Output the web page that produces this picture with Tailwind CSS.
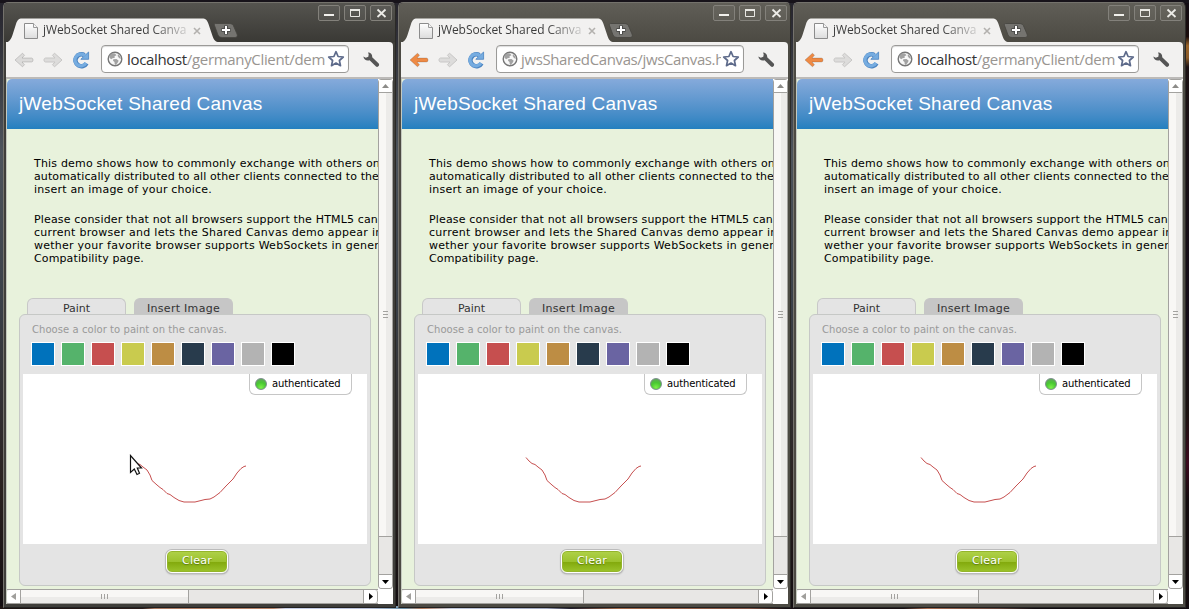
<!DOCTYPE html>
<html lang="en">
<head>
<meta charset="utf-8">
<title>jWebSocket Shared Canvas</title>
<script src="https://cdn.jsdelivr.net/npm/@tailwindcss/browser@4"></script>
</head>
<body class="relative w-[1189px] h-[609px] overflow-hidden bg-[linear-gradient(180deg,#26242c_0%,#4d545c_25%,#3a4048_50%,#2a2220_80%,#120d10_100%)]">
<div class="absolute right-0 top-0 h-full w-[6px] bg-[linear-gradient(180deg,#120c14_0%,#1a0c0c_6%,#9a6428_7.500%,#8a5a28_9.500%,#1c1214_11%,#140c18_55%,#1c1210_68%,#3c0a1e_76%,#140c0e_82%,#140c0e_100%)]"></div>
<div class="absolute left-0 top-0 h-[3px] w-full bg-[#17131a]"></div>
<div class="absolute left-0 bottom-0 h-[3px] w-full bg-[linear-gradient(90deg,#1c1412_0%,#2a1c1a_12%,#a87860_13%,#b88468_23%,#c8d0e8_24%,#b8c0d8_31%,#6a90a8_34%,#b07858_35.500%,#c0c8dc_38%,#a0a8c0_46%,#201c2c_48%,#a06848_52%,#805040_63%,#181014_66%,#180f12_76%,#a86c50_78%,#604038_84%,#120c10_87%)]"></div>

<template id="win">
<section class="absolute top-[2px] w-[393px] h-[606px] flex flex-col rounded-t-[5px] border-t border-l border-[#74726c] border-r border-r-[#2b2a27] border-b border-b-[#222]">
  <header data-part="bar" class="h-[39px] shrink-0 flex items-start rounded-t-[4px] pl-[2px]">
    <div class="relative mt-[15px] h-[25px] w-[207px] flex items-center pl-[18px]">
      <svg class="absolute left-0 top-0" width="213" height="25" viewBox="6 18 213 25"><path d="M6 43C10 41 11 39 12.500 35L16 24C17.500 20 18.500 18.500 22 18.500H202C206 18.500 207 20 208.500 24L212.500 36C214 40 215.500 42 219 42V43Z" fill="#f2f1f0"/></svg>
      <svg class="relative shrink-0" width="14" height="16" viewBox="0 0 14 16"><defs><linearGradient id="pg" x1="0" y1="0" x2="0" y2="1"><stop offset="0" stop-color="#fff"/><stop offset="1" stop-color="#dcdcdc"/></linearGradient></defs><path d="M.5.5H9.500L13.500 4.500V15.500H.5Z" fill="url(#pg)" stroke="#8c8c8c"/><path d="M9.500.5V4.500H13.500" fill="#f6f6f6" stroke="#9a9a9a"/></svg>
      <div class="relative ml-[4px] mb-[2px] w-[144px] overflow-hidden whitespace-nowrap pl-px font-['Open_Sans','Noto_Sans',sans-serif] text-[12px] leading-[18px] text-[#3c3c3c] [mask-image:linear-gradient(90deg,#000_110px,#0003_144px)]"><span data-fit="149" class="inline-block">jWebSocket Shared Canvas</span></div>
      <svg class="relative ml-[7px] shrink-0" width="8" height="8" viewBox="0 0 8 8"><path d="M1 1L7 7M7 1L1 7" stroke="#b3b1ae" stroke-width="1.600"/></svg>
    </div>
    <svg class="mt-[19px]" width="26" height="17" viewBox="213 22 26 17"><path d="M215.500 23.500H229C232 23.500 233.200 24.500 234 27L237 34C237.800 36 237 37.500 235 37.500H222.500C220 37.500 218.600 36.500 217.800 34.500L214.500 25.500C214 24 214.500 23.500 215.500 23.500Z" fill="#757470" stroke="#45443f" stroke-width=".8"/><path d="M226 25.500V34.500M221.500 30H230.500" stroke="#4a4a48" stroke-width="4"/><path d="M226 26V34M222 30H230" stroke="#fff" stroke-width="2"/></svg>
    <svg class="ml-auto mt-[1px] mr-[3px]" width="75" height="18" viewBox="317 4 75 18"><g fill="#ffffff" fill-opacity=".05" stroke="#83817b"><rect x="318.500" y="5.500" width="21" height="15" rx="1.500"/><rect x="344.500" y="5.500" width="21" height="15" rx="1.500"/><rect x="370.500" y="5.500" width="21" height="15" rx="1.500"/></g><path d="M324 15H334" stroke="#f1f0ec" stroke-width="2"/><path d="M350.500 9.500H359.500V16.500H350.500Z" fill="none" stroke="#e8e7e3"/><path d="M350 10H360" stroke="#e8e7e3" stroke-width="2"/><path d="M377.500 9.500L385.500 17M385.500 9.500L377.500 17" stroke="#ecebe7" stroke-width="1.800"/></svg>
  </header>

  <div class="flex-1 min-h-0 flex flex-col border-l-2 border-r-2 border-b-[3px]" data-part="frame">
    <nav class="h-[37px] shrink-0 flex items-center rounded-tr-[4px] border-b-2 border-[#bcbab8] bg-[#f2f1f0] pl-[8px]">
      <svg data-part="back" class="text-[#dcdbda]" width="20" height="16" viewBox="0 0 20 16"><path d="M1 8L8.500 1.200L10.500 3.300L8 6H17.500C19.500 6 19.500 10 17.500 10H8L10.500 12.700L8.500 14.800Z" fill="currentColor" stroke="#00000026" stroke-linejoin="round"/></svg>
      <svg class="ml-[9px] text-[#dddcdb]" width="20" height="16" viewBox="0 0 20 16"><path d="M19 8L11.500 1.200L9.500 3.300L12 6H2.500C.5 6 .5 10 2.500 10H12L9.500 12.700L11.500 14.800Z" fill="currentColor" stroke="#c8c7c6" stroke-linejoin="round"/></svg>
      <svg class="ml-[9px]" width="18" height="18" viewBox="0 0 18 18"><path d="M14.500 12.300A5.900 5.900 0 1 1 12.400 4.200" fill="none" stroke="#4a83c0" stroke-width="4.600"/><path d="M16.600 1V8.300H8.800Z" fill="#76ace0" stroke="#4a83c0" stroke-width=".8"/><path d="M14 11.900A5.900 5.900 0 1 1 13 4.800" fill="none" stroke="#76ace0" stroke-width="3.200"/></svg>
      <div class="ml-[11px] w-[248px] h-[28px] mb-px flex items-center rounded-[4px] border border-[#9b9a98] bg-white pl-[5px] shadow-[inset_0_1px_1px_#ddd]">
        <svg class="shrink-0" width="16" height="16" viewBox="0 0 16 16"><circle cx="8" cy="8" r="6.800" fill="#f8f8f8" stroke="#777" stroke-width="1.400"/><path d="M2.500 4.500L5 2.200L8 2.400L9.500 4.200L7.500 5.200L7.800 6.800L5.600 7.200L4.300 8.200L2.600 7Z" fill="#a2a2a2"/><path d="M6.300 8.200L9.500 8L11.700 9.700L10.500 12L8.800 14L7.700 13.200L7.500 11L6 9.700Z" fill="#a2a2a2"/><path d="M11 3L13.300 5.500L13.800 8L12 7L10.600 5Z" fill="#a2a2a2"/></svg>
        <div data-part="url" class="w-[203px] overflow-hidden whitespace-nowrap font-['Open_Sans','Noto_Sans',sans-serif] text-[15px] leading-[22px] text-[#999591]"></div>
        <svg class="ml-[1px] shrink-0" width="18" height="18" viewBox="0 0 18 18"><path d="M9 1.700L11.100 6.500L16.300 7L12.400 10.500L13.500 15.700L9 13L4.500 15.700L5.600 10.500L1.700 7L6.900 6.500Z" fill="#fff" stroke="#5e6b8b" stroke-width="1.700" stroke-linejoin="round"/></svg>
      </div>
      <svg class="ml-[13px]" width="18" height="18" viewBox="0 0 18 18"><path d="M6 1.500C8.500 1.500 10.500 3.500 10.200 6.300L16.700 12.600C18 14.300 16 16.700 14 15.600L7.600 9.200C4.800 10.200 2 8.800 1.300 5.600L3.800 6.800L6.300 5.800L6.700 3.300Z" fill="#555"/></svg>
    </nav>

    <div class="flex-1 min-h-0 flex bg-[#e8f2dc]">
      <div class="flex-1 min-w-0 flex flex-col border-l border-[#c4c9bf]">
        <main class="flex-1 min-h-0 overflow-hidden bg-[#e8f2dc]">
          <h1 class="h-[50px] pl-[11px] rounded-tl-[5px] bg-linear-to-b from-[#85aadb] to-[#2380bf] text-white font-['Liberation_Sans',sans-serif] text-[19px] leading-[50px] whitespace-nowrap"><span data-fit="244.500" class="inline-block pl-px">jWebSocket Shared Canvas</span></h1>
          <div class="mt-[28px] pl-[27px] h-[141px] whitespace-nowrap font-['DejaVu_Sans',sans-serif] text-[11px] leading-[13px] text-black">
            <p><span data-fit="346" class="inline-block">This demo shows how to commonly exchange with others on</span><br><span data-fit="345" class="inline-block">automatically distributed to all other clients connected to the</span><br><span data-fit="178" class="inline-block">insert an image of your choice.</span></p>
            <p class="mt-[17px]"><span data-fit="344" class="inline-block">Please consider that not all browsers support the HTML5 can</span><br><span data-fit="348.500" class="inline-block">current browser and lets the Shared Canvas demo appear in</span><br><span data-fit="345" class="inline-block">wether your favorite browser supports WebSockets in gener</span><br><span data-fit="110" class="inline-block">Compatibility page.</span></p>
          </div>
          <div class="ml-[20px] flex gap-[8px] font-['DejaVu_Sans',sans-serif] text-[11px] leading-[19px] text-center text-[#333]">
            <div class="h-[16px] w-[99px] rounded-t-[6px] border border-b-0 border-[#c8c8c8] bg-[#e4e4e4]">Paint</div>
            <div class="h-[16px] w-[99px] rounded-t-[6px] border border-b-0 border-[#c6c6c6] bg-[#c6c6c6]"><span data-fit="73" class="inline-block">Insert Image</span></div>
          </div>
          <div class="ml-[12px] w-[352px] h-[272px] rounded-[6px] border border-[#c6c8c6] bg-[#e4e4e4] px-[3px] font-['DejaVu_Sans',sans-serif]">
            <p class="pl-[9px] pt-[8px] h-[21px] text-[10px] leading-[13px] text-[#999]"><span data-fit="195" class="inline-block">Choose a color to paint on the canvas.</span></p>
            <div class="mt-[6px] ml-[8px] flex gap-[6px]">
              <i class="size-[24px] border border-white bg-[#0072bc]"></i><i class="size-[24px] border border-white bg-[#55b36b]"></i><i class="size-[24px] border border-white bg-[#c64f4f]"></i><i class="size-[24px] border border-white bg-[#c9cb4e]"></i><i class="size-[24px] border border-white bg-[#bd8d44]"></i><i class="size-[24px] border border-white bg-[#283b4c]"></i><i class="size-[24px] border border-white bg-[#6a64a2]"></i><i class="size-[24px] border border-white bg-[#b3b3b3]"></i><i class="size-[24px] border border-white bg-black"></i>
            </div>
            <div class="relative mt-[8px] w-[344px] h-[170px] bg-white">
              <svg class="absolute left-0 top-0" width="344" height="170" viewBox="23 374 344 170"><path d="M131 457.500L134 461L137 463.500L140 464.500L143 467L147 470L150 475L152 480.500L157 485L160 487.500L163 489.500L167 493.500L170 494.500L174 497.500L179 500.500L184 502H195L201 500.500L205 499.500L210 499L214 497L220 492.500L226 486L233 479L237 473L241 468.500L244 466.500L246 466" fill="none" stroke="#c64f4f" stroke-width="1"/></svg>
              <div class="absolute left-[226px] top-0 w-[103px] h-[21px] flex items-center rounded-b-[6px] border border-t-0 border-[#c6c6c6] bg-white pl-[5px] text-[10px] leading-[13px] text-black"><i class="size-[12px] mr-[5px] rounded-full border border-[#7c8f8c] bg-[radial-gradient(circle_at_50%_85%,#7cf04a_0%,#48c832_50%,#6a9a68_100%)]"></i><span data-fit="68.500" class="inline-block mb-[2px]">authenticated</span></div>
            </div>
            <button class="mt-[6px] ml-[143px] block w-[62px] h-[23px] pb-[2px] rounded-[6px] border border-white bg-[linear-gradient(180deg,#b0d24a_0%,#9cc22e_50%,#82a90c_52%,#9cc42c_100%)] text-[11px] leading-[19px] text-white shadow-[0_0_0_1px_#bbb,0_1px_2px_#888,inset_0_0_0_1px_#94b52b] [text-shadow:0_1px_1px_#5a7a10]"><span data-fit="30" class="inline-block">Clear</span></button>
          </div>
        </main>
        <div class="h-[15px] shrink-0 flex border-y border-[#a3a29f] bg-[#e8e7e5]">
          <div class="w-[14px] grid place-items-center rounded-l-[3px] border-r border-[#a3a29f] bg-white"><svg width="5" height="7"><path d="M5 0V7L0 3.500Z" fill="#a09f9c"/></svg></div>
          <div class="w-[168px] flex items-center justify-center gap-[2px] border-r border-[#a3a29f] bg-[linear-gradient(180deg,#f8f7f5_55%,#ecebe9_55%)]"><i class="w-px h-[5px] bg-[#a3a29f]"></i><i class="w-px h-[5px] bg-[#a3a29f]"></i><i class="w-px h-[5px] bg-[#a3a29f]"></i></div>
          <div class="ml-auto w-[15px] grid place-items-center rounded-r-[3px] border-x border-[#a3a29f] bg-white"><svg width="4" height="7"><path d="M0 0V7L4 3.500Z" fill="#000"/></svg></div>
        </div>
      </div>
      <div class="w-[15px] shrink-0 flex flex-col bg-white">
        <div class="flex-1 min-h-0 flex flex-col rounded-[3px] border border-[#a3a29f] bg-[#e8e7e5]">
          <div class="h-[13px] grid place-items-center border-b border-[#a3a29f] bg-white"><svg width="7" height="4"><path d="M0 4H7L3.500 0Z" fill="#8c8b88"/></svg></div>
          <div class="h-[444px] flex flex-col items-center justify-center gap-[2px] border-b border-[#a3a29f] bg-[linear-gradient(90deg,#f8f7f5_55%,#ecebe9_55%)]"><i class="h-px w-[5px] bg-[#a3a29f]"></i><i class="h-px w-[5px] bg-[#a3a29f]"></i><i class="h-px w-[5px] bg-[#a3a29f]"></i></div>
          <div class="mt-auto h-[14px] grid place-items-center rounded-b-[3px] border-t border-[#a3a29f] bg-white"><svg width="7" height="4"><path d="M0 0H7L3.500 4Z" fill="#000"/></svg></div>
        </div>
        <div class="h-[15px]"></div>
      </div>
    </div>
  </div>
</section>
</template>

<svg id="cursor" class="absolute left-[129px] top-[454px] z-10" width="16" height="24" viewBox="0 0 16 24"><path d="M1.500 1.500V18.500L5.300 15L8 20.500L10.500 19.300L8.300 14H12.500Z" fill="#fff" stroke="#111" stroke-width="1.200"/></svg>

<script>
const wins = [
  {x: 'left-[3px]', bar: 'bg-linear-to-b from-[#55544f] to-[#3a3935]', frame: 'border-[#3f3e3a] bg-[#3a3935]', back: '', pad: 'pl-[4px]', host: 'localhost', path: '/germanyClient/dem', fit: 198},
  {x: 'left-[398px]', bar: 'bg-linear-to-b from-[#605e57] to-[#4c4a43]', frame: 'border-[#4c4a43] bg-[#4c4a43]', back: 'text-[#ee8a45]', pad: 'pl-[3px]', host: '', path: 'jwsSharedCanvas/jwsCanvas.h', fit: 203},
  {x: 'left-[793px]', bar: 'bg-linear-to-b from-[#605e57] to-[#4c4a43]', frame: 'border-[#4c4a43] bg-[#4c4a43]', back: 'text-[#ee8a45]', pad: 'pl-[4px]', host: 'localhost', path: '/germanyClient/dem', fit: 198}
];
// Spread the letters of a line so that it takes the given width.
function fit(el, width) {
  el.style.letterSpacing = '0px';
  const own = el.getBoundingClientRect().width;
  el.style.letterSpacing = (width - own) / el.textContent.length + 'px';
}
for (const w of wins) {
  const node = document.getElementById('win').content.cloneNode(true);
  node.querySelector('section').classList.add(w.x);
  node.querySelector('[data-part=bar]').classList.add(...w.bar.split(' '));
  node.querySelector('[data-part=frame]').classList.add(...w.frame.split(' '));
  if (w.back) {
    const b = node.querySelector('[data-part=back]');
    b.classList.remove('text-[#dcdbda]');
    b.classList.add(w.back);
  }
  const url = node.querySelector('[data-part=url]');
  url.classList.add(w.pad);
  const line = document.createElement('span');
  line.className = 'inline-block';
  line.dataset.fit = w.fit;
  const host = document.createElement('span');
  host.className = 'text-[#333]';
  host.textContent = w.host;
  line.append(host, w.path);
  url.append(line);
  document.body.append(node);
}
const fitAll = () => document.querySelectorAll('[data-fit]').forEach(el => fit(el, +el.dataset.fit));
window.addEventListener('load', () => { fitAll(); document.fonts.ready.then(fitAll); });
</script>
</body>
</html>
